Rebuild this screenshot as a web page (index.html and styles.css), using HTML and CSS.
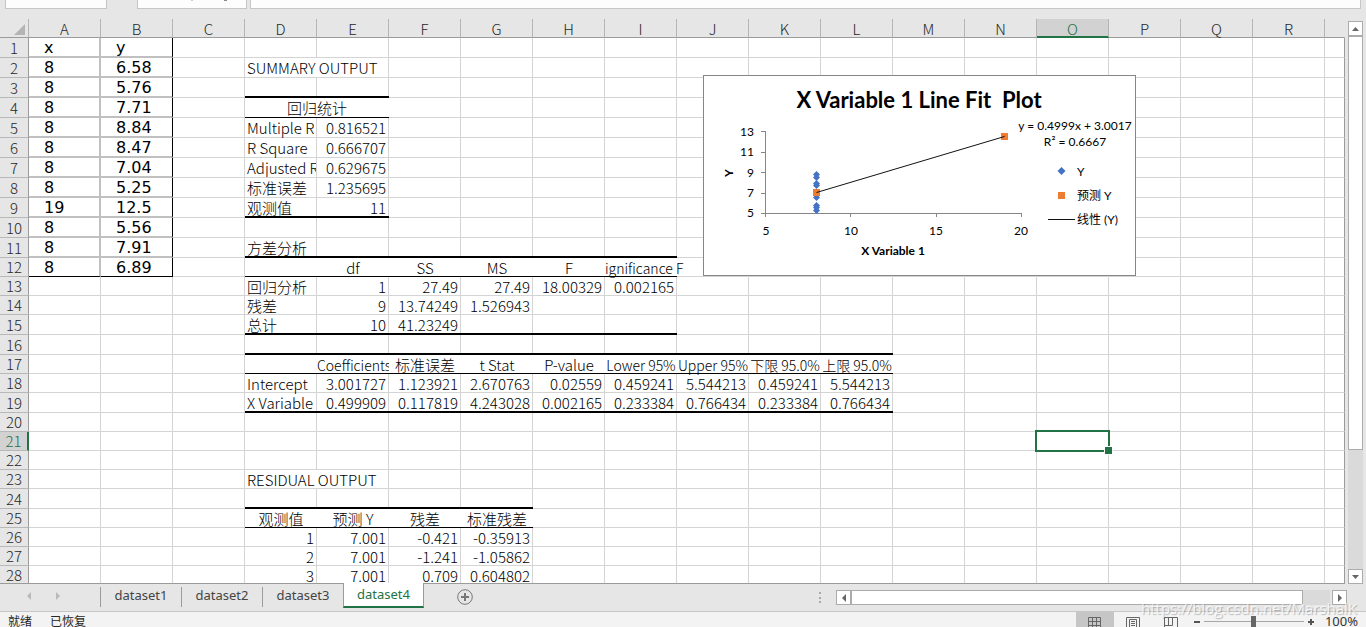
FILE: index.html
```html
<!DOCTYPE html>
<html lang="zh-CN">
<head>
<meta charset="utf-8">
<title>dataset4</title>
<link rel="stylesheet" href="styles.css">
</head>
<body>
<div class="workbook">
  <header class="formula-bar">
    <input class="name-box" type="text" aria-label="名称框">
    <div class="fx-box">
      <svg width="40" height="2" viewBox="0 0 40 2"><path d="M2 0h2v1h-2z" fill="#ccc"/><path d="M35 0h3v1h-3z" fill="#888"/></svg>
    </div>
    <input class="formula-input" type="text" aria-label="编辑栏">
  </header>

  <main class="sheet-area">
    <div class="grid-pane">
      <table class="grid" id="grid"></table>
      <svg class="chart" width="433" height="201" viewBox="0 0 433 201" role="img" aria-label="X Variable 1 Line Fit Plot">
        <rect x="0.5" y="0.5" width="432" height="200" fill="#fff" stroke="#868686"/>
        <text class="chart-title" x="216" y="33" text-anchor="middle">X Variable 1 Line Fit&#160; Plot</text>
        <path class="axis" d="M62.5 56v86M58 56.5h4M58 77.5h4M58 97.5h4M58 118.5h4M58 138.5h260M147.5 138v4M233.5 138v4M318.5 138v4"/>
        <g class="chart-label" text-anchor="end">
          <text x="51" y="61">13</text>
          <text x="51" y="81">11</text>
          <text x="51" y="102">9</text>
          <text x="51" y="122">7</text>
          <text x="51" y="142">5</text>
        </g>
        <g class="chart-label" text-anchor="middle">
          <text x="63" y="160">5</text>
          <text x="148" y="160">10</text>
          <text x="233" y="160">15</text>
          <text x="318" y="160">20</text>
          <text x="372" y="55">y = 0.4999x + 3.0017</text>
          <text x="372" y="71">R² = 0.6667</text>
        </g>
        <text class="axis-title" x="190" y="180" text-anchor="middle">X Variable 1</text>
        <text class="axis-title" transform="translate(30 98) rotate(-90)" text-anchor="middle">Y</text>
        <g id="points" fill="#4472c4"></g>
        <path d="M110 114h7v7h-7zM298 58h7v7h-7zM355 117h7v7h-7z" fill="#ed7d31"/>
        <path d="M113.500 117.500L301.500 61.500M345 144.500h27" fill="none" stroke="#111"/>
        <path d="M358.500 92l4 4-4 4-4-4z" fill="#4472c4"/>
        <g class="chart-label">
          <text x="374" y="101">Y</text>
          <text x="374" y="125">预测 Y</text>
          <text x="374" y="149">线性 (Y)</text>
        </g>
      </svg>
    </div>
    <div class="v-scroll">
      <button class="scroll-btn" aria-label="向上滚动"><svg width="7" height="4" viewBox="0 0 7 4"><path d="M0 4L3.500 0 7 4z"/></svg></button>
      <div class="v-thumb"></div>
      <div class="v-track"></div>
      <button class="scroll-btn" aria-label="向下滚动"><svg width="7" height="4" viewBox="0 0 7 4"><path d="M0 0h7L3.500 4z"/></svg></button>
    </div>
  </main>

  <nav class="tab-bar">
    <div class="tab-nav">
      <button aria-label="上一个工作表"><svg width="4" height="8" viewBox="0 0 4 8"><path d="M4 0v8L0 4z"/></svg></button>
      <button aria-label="下一个工作表"><svg width="4" height="8" viewBox="0 0 4 8"><path d="M0 0v8l4-4z"/></svg></button>
    </div>
    <button class="tab">dataset1</button>
    <button class="tab">dataset2</button>
    <button class="tab">dataset3</button>
    <button class="tab active">dataset4</button>
    <button class="add-tab" aria-label="新工作表"><svg width="16" height="16" viewBox="0 0 16 16"><circle cx="8" cy="8" r="7.300" fill="none" stroke="#777"/><path d="M4 7h3V4h2v3h3v2H9v3H7V9H4z" fill="#777"/></svg></button>
    <svg class="splitter" width="2" height="12" viewBox="0 0 2 12"><path d="M0 0h2v2H0zM0 5h2v2H0zM0 9h2v2H0z" fill="#aaa"/></svg>
    <div class="h-scroll">
      <button class="scroll-btn" aria-label="向左滚动"><svg width="4" height="8" viewBox="0 0 4 8"><path d="M4 0v8L0 4z"/></svg></button>
      <div class="h-thumb"></div>
      <div class="h-track"></div>
      <button class="scroll-btn" aria-label="向右滚动"><svg width="4" height="8" viewBox="0 0 4 8"><path d="M0 0v8l4-4z"/></svg></button>
    </div>
  </nav>

  <footer class="status-bar">
    <span class="status-text">就绪</span>
    <span class="status-text">已恢复</span>
    <div class="status-tools">
      <button class="view active" aria-label="普通"><svg width="14" height="14" viewBox="0 0 14 14"><path d="M.5.5h12v12H.5zM4.500 0v13M8.500 0v13M0 4.500h13M0 8.500h13"/></svg></button>
      <button class="view" aria-label="页面布局"><svg width="14" height="14" viewBox="0 0 14 14"><path d="M.5.5h13v13H.5zM3.500 2.500h7v10h-7zM5 4.500h4M5 6.500h4M5 8.500h4M5 10.500h4"/></svg></button>
      <button class="view" aria-label="分页预览"><svg width="14" height="14" viewBox="0 0 14 14"><path d="M.5.5h13v13H.5zM.5 8.500h8v-8M4.500 0v8"/></svg></button>
      <button class="zoom-btn" aria-label="缩小"><svg width="8" height="8" viewBox="0 0 8 8"><path d="M1 3h6v2H1z"/></svg></button>
      <input class="zoom-range" type="range" min="0" max="100" value="50" aria-label="缩放">
      <button class="zoom-btn" aria-label="放大"><svg width="8" height="8" viewBox="0 0 8 8"><path d="M1 3h2V1h2v2h2v2H5v2H3V5H1z"/></svg></button>
      <span class="zoom-value">100%</span>
    </div>
  </footer>
  <div class="watermark">https://blog.csdn.net/MarshalK</div>
</div>
<script src="app.js"></script>
</body>
</html>
```
FILE: styles.css
```css
* { box-sizing: border-box; }
body {
  margin: 0;
  overflow: hidden;
  background: #e6e6e6;
  font-family: "Noto Sans CJK SC", sans-serif;
  color: #000;
}
button { margin: 0; padding: 0; border: 0; background: none; font: inherit; color: inherit; }
.workbook { position: relative; display: flex; flex-direction: column; height: 100vh; }

.formula-bar { display: flex; height: 9px; flex: none; padding: 0 5px; }
.name-box, .fx-box, .formula-input {
  height: 9px; padding: 0; border: 1px solid #c6c6c6; border-top: 0; border-radius: 0; background: #fdfdfd;
}
.name-box { width: 102px; margin-right: 30px; }
.fx-box { display: flex; width: 110px; margin-right: 3px; padding-left: 51px; }
.formula-input { flex: 1; }

.sheet-area { display: flex; flex: 1; min-height: 0; padding-top: 10px; }
.grid-pane { position: relative; flex: 1; min-width: 0; overflow: hidden; border-bottom: 1px solid #9b9b9b; }
.grid { width: 100%; table-layout: fixed; border-collapse: separate; border-spacing: 0; background: #fff; }
.col-head { width: 29px; }
.col { width: 72px; }
.grid th, .grid td { padding: 0; height: inherit; white-space: nowrap; }
.grid th { background: #e6e6e6; font-size: 15px; font-weight: 300; line-height: 18px; color: #262626; }
.grid thead th { padding-top: 2px; line-height: 16px; border-bottom: 1px solid #9b9b9b; border-right: 1px solid #b4b4b4; }
.grid tbody th { border-right: 1px solid #9b9b9b; border-bottom: 1px solid #b8b8b8; }
.grid thead th.on { background: #d2d2d2; color: #217346; border-bottom: 2px solid #217346; line-height: 15px; }
.grid tbody th.on { background: #d2d2d2; color: #217346; border-right: 2px solid #217346; }
.grid td {
  padding: 0 2px;
  border-right: 1px solid #d4d4d4; border-bottom: 1px solid #d4d4d4;
  font-size: 15px; font-weight: 300; line-height: 19px; vertical-align: bottom;
}
.grid .low td { line-height: 17px; }
.grid th:last-child { border-right: 1px solid #e6e6e6; }
.grid tbody td:last-child { border-right: 1px solid #9b9b9b; }
.corner svg { display: block; margin-left: 14px; fill: #b4b4b4; }
.h20 { height: 20px; }
.h19 { height: 19px; }
.grid td.num { text-align: right; }
.grid td.mid { text-align: center; }
.grid td.cut { overflow: hidden; }
.grid td.tight { padding: 0; font-size: 14px; line-height: 15px; }
/* Ruled cells draw their right gridline inside, so that the rule below runs on unbroken */
.grid td.thick, .grid td.thin {
  border-right: 0;
  background: linear-gradient(#d4d4d4, #d4d4d4) right / 1px 100% no-repeat padding-box;
}
.grid td.thick { border-bottom: 2px solid #000; line-height: 17px; }
.grid td.thin { border-bottom: 1px solid #000; }
.grid td.open { background: none; }
.grid td.thick.num { padding-right: 3px; }
.grid td.data {
  padding: 0 15px;
  border-right: 2px solid #c0c0c0; border-bottom: 2px solid #c0c0c0;
  font-family: "DejaVu Sans", sans-serif; font-size: 16px; font-weight: 400; line-height: 16px;
}
.grid td.edge { border-right: 1px solid #000; }
.grid td.data.last { border-bottom: 1px solid #000; }
.grid td.selected { position: relative; }
.cursor { position: absolute; inset: -2px; border: 2px solid #217346; }
.cursor::after {
  content: ""; position: absolute; right: -5px; bottom: -5px; width: 7px; height: 7px;
  background: #217346; border: 1px solid #fff;
}

.chart { position: absolute; left: 703px; top: 56px; }
.chart text { font-family: Lato, "Noto Sans CJK SC", sans-serif; white-space: pre; }
.chart-title { font-size: 22px; font-weight: 700; }
.chart-label { font-size: 12px; }
.axis-title { font-size: 12px; font-weight: 700; }
.axis { fill: none; stroke: #868686; }

.v-scroll { display: flex; flex-direction: column; width: 15px; margin: 2px 3px 0 3px; }
.scroll-btn {
  display: flex; flex: none; align-items: center; justify-content: center;
  width: 15px; height: 15px; background: #fff; border: 1px solid #ababab;
}
.scroll-btn svg { fill: #666; }
.v-thumb { flex: 414; background: #fff; border: 1px solid #ababab; }
.v-track { flex: 119; background: #dadada; }

.tab-bar { display: flex; flex: none; height: 27px; padding-right: 19px; }
.tab-nav { display: flex; width: 100px; padding: 0 0 3px 27px; gap: 25px; }
.tab-nav svg { display: block; fill: #bababa; }
.tab {
  width: 81px; height: 20px; margin-top: 3px; padding-bottom: 3px; border-left: 1px solid #9b9b9b;
  font-family: "Noto Sans", sans-serif; font-size: 13px; line-height: 17px; color: #444;
}
.tab.active {
  height: 25px; margin-top: -1px; padding-bottom: 0; background: #fff; color: #217346;
  border-right: 1px solid #9b9b9b; border-bottom: 2px solid #217346; position: relative;
}
.add-tab { width: 16px; height: 16px; margin: 5px 0 0 33px; line-height: 0; }
.splitter { margin: 8px 15px 0 auto; }
.h-scroll { display: flex; width: 511px; height: 15px; margin-top: 6px; }
.h-thumb { flex: 452; background: #fff; border: 1px solid #ababab; }
.h-track { flex: 27; margin-right: 2px; background: #dadada; }

.status-bar {
  display: flex; flex: none; height: 16px; overflow: hidden; padding: 0 8px;
  background: #f3f3f3; border-top: 1px solid #c6c6c6;
}
.status-text { margin-right: 18px; font-size: 12px; line-height: 18px; color: #262626; }
.status-tools { display: flex; align-items: flex-start; margin-left: auto; }
.view { width: 38px; height: 20px; padding-top: 3px; line-height: 0; }
.view.active { background: #c6c6c6; }
.view svg { fill: none; stroke: #666; }
.zoom-btn { width: 14px; height: 18px; padding-top: 2px; line-height: 0; }
.zoom-btn svg { fill: #555; }
.zoom-range { appearance: none; width: 100px; height: 19px; margin: 0; background: linear-gradient(#a6a6a6, #a6a6a6) center / 100% 1px no-repeat; }
.zoom-range::-webkit-slider-thumb { appearance: none; width: 5px; height: 12px; background: #666; }
.zoom-value { margin-left: 7px; font-family: "Noto Sans", sans-serif; font-size: 13px; line-height: 19px; color: #333; }
.watermark {
  position: absolute; right: 9px; bottom: 9px;
  font-family: "Open Sans", sans-serif; font-size: 15px; line-height: 20px;
  color: rgba(255, 255, 255, .75); text-shadow: 1px 1px 1px rgba(0, 0, 0, .25); pointer-events: none;
}
```
FILE: app.js
```js
const COLS = 'ABCDEFGHIJKLMNOPQR'.split('');
const SHORT_ROWS = [12, 13, 14, 17, 18, 20, 21, 22, 23, 25, 26, 27, 28];
const xs = [8, 8, 8, 8, 8, 8, 8, 19, 8, 8, 8];
const ys = [6.58, 5.76, 7.71, 8.84, 8.47, 7.04, 5.25, 12.5, 5.56, 7.91, 6.89];

/* Row number -> values starting at column D */
const rows = {
  2: ['SUMMARY OUTPUT'],
  4: ['回归统计'],
  5: ['Multiple R', '0.816521'],
  6: ['R Square', '0.666707'],
  7: ['Adjusted R', '0.629675'],
  8: ['标准误差', '1.235695'],
  9: ['观测值', '11'],
  11: ['方差分析'],
  12: ['', 'df', 'SS', 'MS', 'F', 'ignificance F'],
  13: ['回归分析', '1', '27.49', '27.49', '18.00329', '0.002165'],
  14: ['残差', '9', '13.74249', '1.526943'],
  15: ['总计', '10', '41.23249'],
  17: ['', 'Coefficients', '标准误差', 't Stat', 'P-value', 'Lower 95%', 'Upper 95%', '下限 95.0%', '上限 95.0%'],
  18: ['Intercept', '3.001727', '1.123921', '2.670763', '0.02559', '0.459241', '5.544213', '0.459241', '5.544213'],
  19: ['X Variable', '0.499909', '0.117819', '4.243028', '0.002165', '0.233384', '0.766434', '0.233384', '0.766434'],
  23: ['RESIDUAL OUTPUT'],
  25: ['观测值', '预测 Y', '残差', '标准残差'],
  26: ['1', '7.001', '-0.421', '-0.35913'],
  27: ['2', '7.001', '-1.241', '-1.05862'],
  28: ['3', '7.001', '0.709', '0.604802']
};
const HEADINGS = [4, 12, 17, 25];
/* Row number -> number of columns, from D, that carry a rule below */
const thick = { 3: 2, 9: 2, 11: 6, 15: 6, 16: 9, 19: 9, 24: 4 };
const thin = { 4: 2, 12: 6, 17: 9, 25: 4 };
const wide = { '2D': 2, '4D': 2, '23D': 2 };

let html = '<colgroup><col class="col-head">' + '<col class="col">'.repeat(18) + '<col></colgroup>';
html += '<thead><tr class="h19"><th class="corner"><svg width="11" height="11" viewBox="0 0 11 11"><path d="M11 0v11H0z"/></svg></th>';
COLS.forEach(c => { html += `<th scope="col"${c === 'O' ? ' class="on"' : ''}>${c}</th>`; });
html += '<th></th></tr></thead><tbody>';

for (let r = 1; r <= 28; r++) {
  html += `<tr class="${SHORT_ROWS.includes(r) ? 'h19' : 'h20'}${r >= 12 ? ' low' : ''}"><th scope="row"${r === 21 ? ' class="on"' : ''}>${r}</th>`;
  for (let c = 0; c < 19; c++) {
    const cls = [];
    let text = '';
    if (c < 2 && r <= 12) {
      text = r === 1 ? ['x', 'y'][c] : [xs, ys][c][r - 2];
      cls.push('data');
      if (c === 1) cls.push('edge');
      if (r === 12) cls.push('last');
    } else if (c > 2) {
      const i = c - 3;
      text = (rows[r] && rows[r][i]) || '';
      if (HEADINGS.includes(r) && i < thin[r] && !text.startsWith('ignif')) cls.push('mid');
      if (HEADINGS.includes(r) && i < thin[r]) cls.push('open');
      if (/^-?[\d.]+$/.test(text)) cls.push('num');
      if (/^(Coef|ignif|Lower|Upper|下限|上限)/.test(text)) cls.push('tight');
      if (/^(Coef|Adjusted)/.test(text)) cls.push('cut');
      if (i < (thick[r] || 0)) cls.push('thick');
      if (i < (thin[r] || 0)) cls.push('thin');
    }
    const key = r + (COLS[c] || '');
    const span = wide[key] || 1;
    if (key === '21O') { cls.push('selected'); text = '<div class="cursor"></div>'; }
    html += `<td class="${cls.join(' ')}"${span > 1 ? ` colspan="${span}"` : ''}>${text}</td>`;
    c += span - 1;
  }
  html += '</tr>';
}
document.getElementById('grid').innerHTML = html + '</tbody>';

document.getElementById('points').innerHTML = ys.map((y, i) =>
  `<path d="M${Math.floor(62.4 + (xs[i] - 5) * 17.07) + .5} ${Math.floor(138.5 - (y - 5) * 10.25) - 3}l3.5 3.5-3.5 3.5-3.5-3.5z"/>`
).join('');
```
